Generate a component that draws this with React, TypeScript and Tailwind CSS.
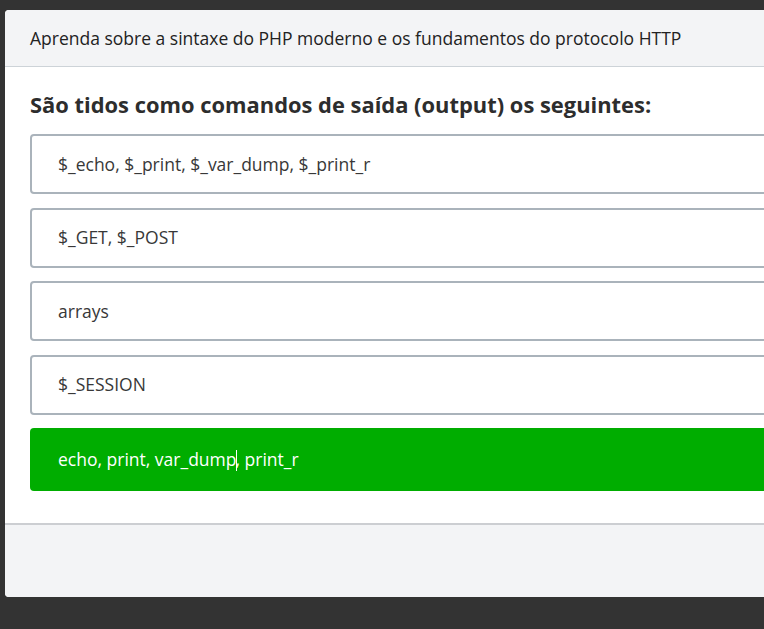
const OPTIONS = [
  "$_echo, $_print, $_var_dump, $_print_r",
  "$_GET, $_POST",
  "arrays",
  "$_SESSION",
];

function Option({ label }: { label: string }) {
  return (
    <div className="flex h-[60px] items-center rounded-[4px] border-2 border-[#aab3bb] bg-white px-[26px] text-[17.5px] text-[#383838]">
      {label}
    </div>
  );
}

export default function App() {
  return (
    <div
      className="min-h-[629px] w-full overflow-hidden bg-[#333333] pl-[5px] pt-[10px]"
      style={{ fontFamily: '"Open Sans", "Noto Sans", sans-serif' }}
    >
      <div className="w-[900px] overflow-hidden rounded-[4px] bg-white">
        {/* Header */}
        <div className="flex h-[57px] items-center border-b border-[#cdd3d8] bg-[#f3f4f6] px-[25px] text-[17.5px] text-[#222222]">
          Aprenda sobre a sintaxe do PHP moderno e os fundamentos do protocolo HTTP
        </div>

        {/* Body */}
        <div className="px-[25px] pb-[32px] pt-[24px]">
          <h2 className="mb-[15px] text-[21.9px] font-bold leading-[28px] text-[#2d2d2d]">
            São tidos como comandos de saída (output) os seguintes:
          </h2>
          <div className="flex flex-col gap-[13.5px]">
            {OPTIONS.map((o) => (
              <Option key={o} label={o} />
            ))}
            <div className="flex h-[63px] items-center rounded-[4px] bg-[#00ad00] px-[28px] text-[17.5px] text-white">
              <span>echo, print, var_dump</span>
              <span className="mx-[-1px] inline-block h-[21px] w-px translate-y-[1px] bg-white" />
              <span>, print_r</span>
            </div>
          </div>
        </div>

        {/* Footer */}
        <div className="h-[74px] border-t-2 border-[#ccced2] bg-[#f3f4f6]" />
      </div>
    </div>
  );
}
